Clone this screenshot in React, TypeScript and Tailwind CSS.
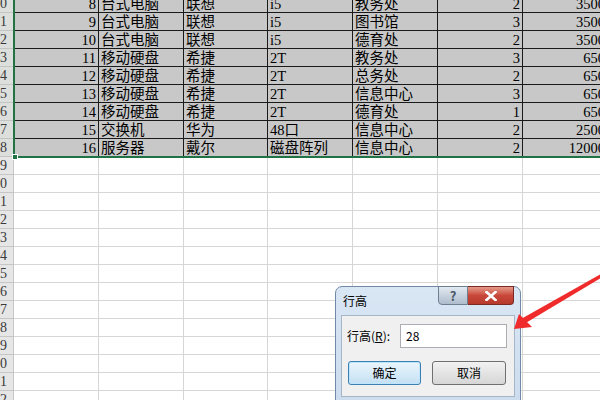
import React from "react";

const rows = [
  ["8", "台式电脑", "联想", "i5", "教务处", "2", "3500"],
  ["9", "台式电脑", "联想", "i5", "图书馆", "3", "3500"],
  ["10", "台式电脑", "联想", "i5", "德育处", "2", "3500"],
  ["11", "移动硬盘", "希捷", "2T", "教务处", "3", "650"],
  ["12", "移动硬盘", "希捷", "2T", "总务处", "2", "650"],
  ["13", "移动硬盘", "希捷", "2T", "信息中心", "3", "650"],
  ["14", "移动硬盘", "希捷", "2T", "德育处", "1", "650"],
  ["15", "交换机", "华为", "48口", "信息中心", "2", "2500"],
  ["16", "服务器", "戴尔", "磁盘阵列", "信息中心", "2", "12000"],
];

const widths = ["w-[85px]", "w-[85px]", "w-[84px]", "w-[85px]", "w-[85px]", "w-[85px]", "w-[85px]"];
const rightAligned = [true, false, false, false, false, true, true];

const font = { fontFamily: '"Liberation Serif", "Noto Sans CJK SC", serif' };

function DataRow({ label, cells }: { label: string; cells: string[] }) {
  return (
    <div className="flex h-[18px]">
      <div className="w-[14px] shrink-0 h-[18px] bg-[#dcdfdc] border-b border-[#c2c6c2] text-[14px] leading-[18px] text-[#3a3a3a] pl-0">
        {label}
      </div>
      {cells.map((c, i) => (
        <div
          key={i}
          className={`${widths[i]} shrink-0 h-[18px] bg-[#c8c8c8] border-r border-b border-[#1a1a1a] text-[14.5px] leading-[18px] text-black whitespace-nowrap overflow-hidden ${
            rightAligned[i] ? "text-right pr-[2px]" : "pl-[2px]"
          }`}
        >
          {c}
        </div>
      ))}
    </div>
  );
}

function EmptyRow({ label }: { label: string }) {
  return (
    <div className="flex h-[18px]">
      <div className="w-[14px] shrink-0 h-[18px] bg-[#e6e6e6] border-r border-b border-[#c6c6c6] text-[14px] leading-[18px] text-[#3a3a3a]">
        {label}
      </div>
      {widths.map((w, i) => (
        <div key={i} className={`${w} shrink-0 h-[18px] border-r border-b border-[#d6d6d6]`} />
      ))}
    </div>
  );
}

function Dialog() {
  return (
    <div
      className="absolute left-[335px] top-[286px] w-[186px] h-[130px] rounded-t-[7px] border border-[#7189a6] bg-gradient-to-b from-[#d9e6f4] to-[#cbdcee] flex flex-col"
      style={{ fontFamily: '"Noto Sans CJK SC", sans-serif' }}
    >
      <div className="h-[28px] flex items-center pl-[7px] text-[12px] text-black">行高</div>
      {/* caption buttons */}
      <div className="absolute top-[-1px] left-[102px] flex">
        <div className="w-[30px] h-[19px] rounded-bl-[4px] border border-[#6f7f92] bg-gradient-to-b from-[#e2e9f1] to-[#aebccc] flex items-center justify-center text-[13px] font-bold text-[#4a5868]">
          ?
        </div>
        <div className="w-[46px] h-[19px] rounded-br-[4px] border border-l-0 border-[#7a2a22] bg-gradient-to-b from-[#e39a8c] via-[#c9473a] to-[#b63a2c] flex items-center justify-center">
          <svg width="12" height="10" viewBox="0 0 12 10">
            <path d="M1.5 1 L10.5 9 M10.5 1 L1.5 9" stroke="white" strokeWidth="2.6" strokeLinecap="square" />
          </svg>
        </div>
      </div>
      <div className="mx-[5px] h-[82px] border border-[#a6b6c8] bg-[#f0f0f0] px-[5px] pt-[8px] flex flex-col">
        <div className="flex items-center">
          <span className="w-[53px] text-[12px] text-black">
            行高(<span className="underline">R</span>):
          </span>
          <div className="w-[107px] h-[24px] border border-[#abadb3] bg-white pl-[5px] text-[12px] leading-[22px] text-black">
            28
          </div>
        </div>
        <div className="flex gap-[11px] mt-[13px] pl-[1px]">
          <div className="w-[73px] h-[24px] rounded-[3px] border border-[#3c7fb1] bg-gradient-to-b from-[#eaf6fd] to-[#c4e0f3] shadow-[inset_0_0_0_1px_#bde6fd] flex items-center justify-center text-[12px] text-black">
            确定
          </div>
          <div className="w-[74px] h-[24px] rounded-[3px] border border-[#707070] bg-gradient-to-b from-[#f2f2f2] to-[#d6d6d6] flex items-center justify-center text-[12px] text-black">
            取消
          </div>
        </div>
      </div>
    </div>
  );
}

export default function App() {
  const emptyLabels = ["9", "0", "1", "2", "3", "4", "5", "6", "7", "8", "9", "0", "1", "2"];
  return (
    <div className="relative w-[600px] h-[400px] overflow-hidden bg-white" style={font}>
      <div className="mt-[-5px] flex flex-col">
        {rows.map((r, i) => (
          <DataRow key={i} label={String(i)} cells={r} />
        ))}
        {emptyLabels.map((l, i) => (
          <EmptyRow key={i} label={l} />
        ))}
      </div>

      {/* selection outline */}
      <div className="absolute left-[13px] top-0 w-[2px] h-[158px] bg-[#217346]" />
      <div className="absolute left-[13px] top-[156px] w-[587px] h-[2px] bg-[#217346]" />
      <div className="absolute left-[12px] top-[154px] w-[6px] h-[6px] bg-[#217346] border border-white" />

      <Dialog />

      <svg className="absolute left-0 top-0" width="600" height="400" viewBox="0 0 600 400">
        <polygon points="601,274 601,278 524,324 521,319" fill="#ef2b2b" />
        <polygon points="514,329 519,314 532,327" fill="#ef2b2b" />
      </svg>
    </div>
  );
}
